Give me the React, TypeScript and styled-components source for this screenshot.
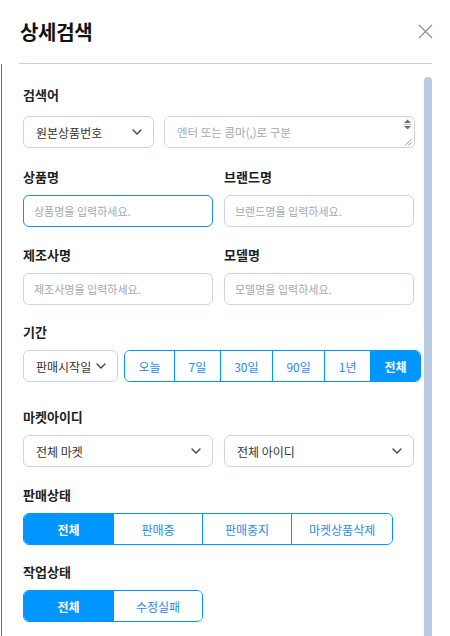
import React from 'react';
import styled, { createGlobalStyle } from 'styled-components';

const GlobalStyle = createGlobalStyle`
  html, body { margin: 0; padding: 0; background: #fff; overflow: hidden; }
  body { font-family: "Noto Sans CJK KR", "Noto Sans", sans-serif; color: #222; }
  * { box-sizing: border-box; }
`;

const BLUE = '#0096ff';
const LINE = '#cbd4e2';

const Modal = styled.div`
  width: 450px;
  height: 720px;
  display: flex;
  flex-direction: column;
  background: #fff;
`;

const Header = styled.div`
  display: flex;
  align-items: center;
  justify-content: space-between;
  height: 63px;
  padding: 0 17px 0 20px;
`;

const Title = styled.h1`
  margin: 0;
  font-size: 20px;
  font-weight: 700;
  color: #111;
  letter-spacing: -0.3px;
`;

const CloseButton = styled.button`
  border: 0;
  background: none;
  padding: 0;
  width: 16px;
  height: 16px;
  display: flex;
  align-items: center;
  justify-content: center;
  cursor: pointer;
`;

const Divider = styled.div`
  height: 1px;
  margin: 0 18px 0 19px;
  background: #c4d2e6;
`;

const BodyFrame = styled.div`
  flex: 1;
  min-height: 0;
  margin-left: 1px;
  border-left: 1px solid #6c6c6c;
  width: 431px;
  display: flex;
`;

const Content = styled.div`
  flex: 1;
  min-width: 0;
  padding: 22px 3px 40px 21px;
`;

const ScrollTrack = styled.div`
  width: 8px;
  flex: none;
  display: flex;
  flex-direction: column;
  padding-top: 13px;
`;

const ScrollThumb = styled.div`
  flex: 1;
  background: #b9cae3;
  border-radius: 4px 4px 0 0;
`;

const Section = styled.section<{ $top?: number }>`
  margin-top: ${p => p.$top ?? 0}px;
`;

const Label = styled.div<{ $gap?: number }>`
  font-size: 13px;
  font-weight: 600;
  line-height: 18px;
  color: #222;
  margin-bottom: ${p => p.$gap ?? 9}px;
`;

const Pair = styled.div`
  display: grid;
  grid-template-columns: 190px 190px;
  column-gap: 11px;
`;

const Row = styled.div<{ $gap: number; $width?: number }>`
  display: flex;
  gap: ${p => p.$gap}px;
  align-items: stretch;
  ${p => (p.$width ? `width: ${p.$width}px;` : '')}
`;

const Col = styled.div``;

const SelectBox = styled.div<{ $width?: number }>`
  ${p => (p.$width ? `width: ${p.$width}px; flex: none;` : '')}
  height: 32px;
  display: flex;
  align-items: center;
  justify-content: space-between;
  padding: 0 11px 0 12px;
  border: 1px solid ${LINE};
  border-radius: 6px;
  font-size: 12px;
  color: #333;
  background: #fff;
  white-space: nowrap;
`;

const TextInput = styled.input<{ $focused?: boolean }>`
  width: 100%;
  height: 32px;
  padding: 0 10px;
  border: 1px solid ${p => (p.$focused ? '#1f8cf0' : LINE)};
  border-radius: 6px;
  font-family: inherit;
  font-size: 11px;
  color: #333;
  outline: none;
  &::placeholder { color: #a3a9b3; }
`;

const TextAreaBox = styled.div`
  flex: 1;
  height: 32px;
  display: flex;
  border: 1px solid ${LINE};
  border-radius: 6px;
  overflow: hidden;
`;

const TextArea = styled.textarea`
  flex: 1;
  min-width: 0;
  height: 100%;
  padding: 7px 12px;
  border: 0;
  font-family: inherit;
  font-size: 11.5px;
  line-height: 17px;
  color: #333;
  resize: none;
  outline: none;
  &::placeholder { color: #a3a9b3; }
`;

const ScrollStub = styled.div`
  width: 13px;
  flex: none;
  display: flex;
  flex-direction: column;
  justify-content: space-between;
  align-items: center;
  padding: 2px 0 1px;
`;

const Segments = styled.div<{ $grow?: boolean }>`
  display: ${p => (p.$grow ? 'flex' : 'inline-flex')};
  ${p => (p.$grow ? 'flex: 1;' : '')}
  height: 32px;
  border: 1px solid ${BLUE};
  border-radius: 6px;
  overflow: hidden;
`;

const Segment = styled.button<{ $active?: boolean; $fluid?: boolean }>`
  ${p => (p.$fluid ? 'flex: 1 1 auto; padding: 0 12px;' : 'min-width: 89px; padding: 0 17px;')}
  border: 0;
  border-left: 1px solid ${BLUE};
  &:first-child { border-left: 0; }
  background: ${p => (p.$active ? BLUE : '#fff')};
  color: ${p => (p.$active ? '#fff' : '#1f8bf0')};
  font-family: inherit;
  font-size: 12px;
  font-weight: ${p => (p.$active ? 700 : 400)};
  white-space: nowrap;
  cursor: pointer;
`;

const Chevron = () => (
  <svg width="10" height="6" viewBox="0 0 10 6" fill="none">
    <path d="M1 1l4 4 4-4" stroke="#444" strokeWidth="1.4" strokeLinecap="round" strokeLinejoin="round" />
  </svg>
);

const Select = ({ label, width }: { label: string; width?: number }) => (
  <SelectBox $width={width}>
    <span>{label}</span>
    <Chevron />
  </SelectBox>
);

const periods = ['오늘', '7일', '30일', '90일', '1년', '전체'];
const saleStates = ['전체', '판매중', '판매중지', '마켓상품삭제'];
const jobStates = ['전체', '수정실패'];

export default function App() {
  return (
    <>
      <GlobalStyle />
      <Modal>
        <Header>
          <Title>상세검색</Title>
          <CloseButton aria-label="닫기">
            <svg width="15" height="15" viewBox="0 0 15 15">
              <path d="M1 1l13 13M14 1L1 14" stroke="#8e8e8e" strokeWidth="1.1" />
            </svg>
          </CloseButton>
        </Header>
        <Divider />
        <BodyFrame>
          <Content>
            <Section>
              <Label $gap={12}>검색어</Label>
              <Row $gap={10} $width={392}>
                <Select label="원본상품번호" width={131} />
                <TextAreaBox>
                  <TextArea placeholder="엔터 또는 콤마(,)로 구분" />
                  <ScrollStub>
                    <svg width="9" height="11" viewBox="0 0 9 11">
                      <path d="M4.5 0.5L8 4H1z" fill="#707070" />
                      <path d="M0.5 5.5h8" stroke="#b0b0b0" strokeWidth="0.8" />
                      <path d="M4.5 10.5L8 7H1z" fill="#707070" />
                    </svg>
                    <svg width="9" height="9" viewBox="0 0 9 9">
                      <path d="M8.5 2L2 8.5M8.5 5.5L5.5 8.5" stroke="#777" strokeWidth="0.8" />
                    </svg>
                  </ScrollStub>
                </TextAreaBox>
              </Row>
            </Section>

            <Section $top={20}>
              <Pair>
                <Col>
                  <Label>상품명</Label>
                  <TextInput $focused placeholder="상품명을 입력하세요." />
                </Col>
                <Col>
                  <Label>브랜드명</Label>
                  <TextInput placeholder="브랜드명을 입력하세요." />
                </Col>
              </Pair>
            </Section>

            <Section $top={19}>
              <Pair>
                <Col>
                  <Label>제조사명</Label>
                  <TextInput placeholder="제조사명을 입력하세요." />
                </Col>
                <Col>
                  <Label>모델명</Label>
                  <TextInput placeholder="모델명을 입력하세요." />
                </Col>
              </Pair>
            </Section>

            <Section $top={18}>
              <Label>기간</Label>
              <Row $gap={6}>
                <Select label="판매시작일" width={95} />
                <Segments $grow>
                  {periods.map(p => (
                    <Segment key={p} $fluid $active={p === '전체'}>{p}</Segment>
                  ))}
                </Segments>
              </Row>
            </Section>

            <Section $top={26}>
              <Label>마켓아이디</Label>
              <Pair>
                <Select label="전체 마켓" />
                <Select label="전체 아이디" />
              </Pair>
            </Section>

            <Section $top={19}>
              <Label>판매상태</Label>
              <Segments>
                {saleStates.map(s => (
                  <Segment key={s} $active={s === '전체'}>{s}</Segment>
                ))}
              </Segments>
            </Section>

            <Section $top={18}>
              <Label>작업상태</Label>
              <Segments>
                {jobStates.map(s => (
                  <Segment key={s} $active={s === '전체'}>{s}</Segment>
                ))}
              </Segments>
            </Section>
          </Content>
          <ScrollTrack>
            <ScrollThumb />
          </ScrollTrack>
        </BodyFrame>
      </Modal>
    </>
  );
}
